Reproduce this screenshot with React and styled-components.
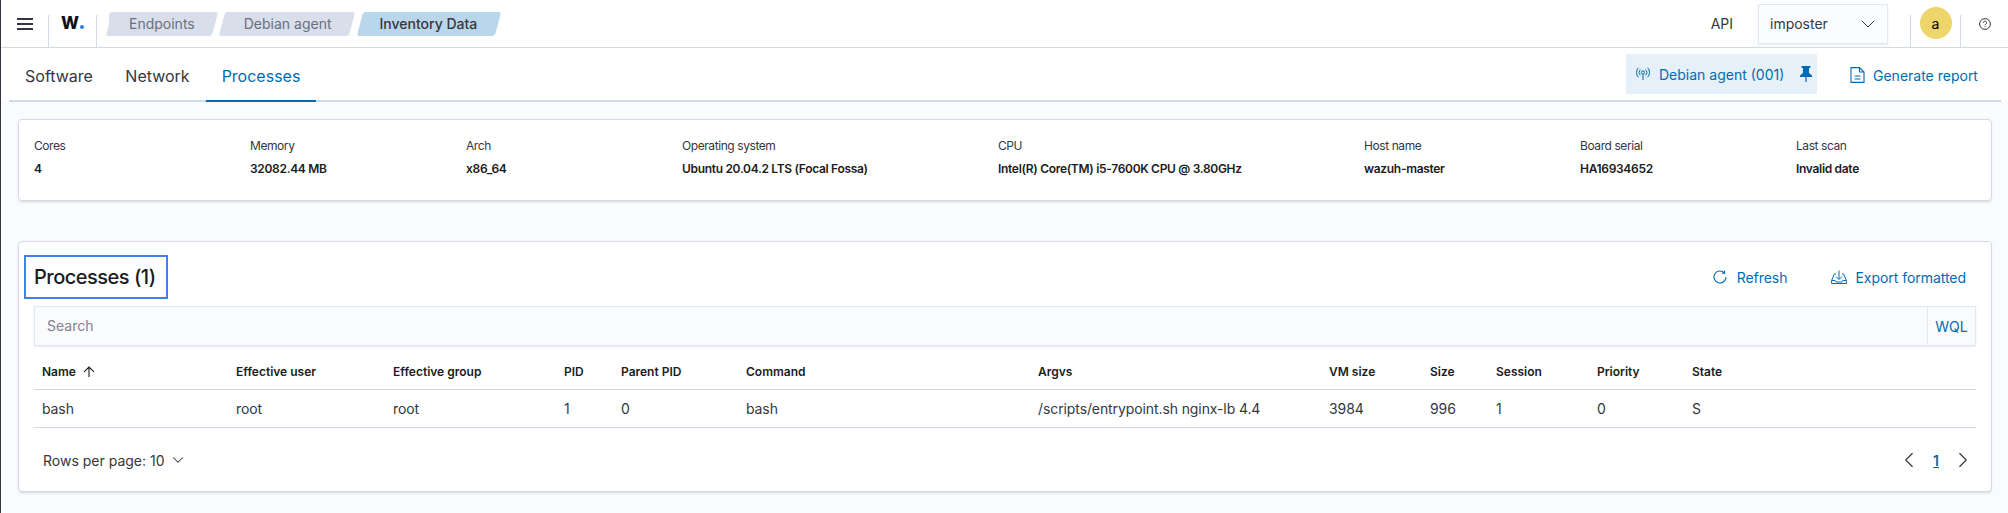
import React from "react";
import styled, { createGlobalStyle } from "styled-components";
import { ChevronDown, ChevronLeft, ChevronRight } from "lucide-react";

const Global = createGlobalStyle`
  html, body { margin: 0; padding: 0; background: #fafbfd; }
  * { box-sizing: border-box; }
  body { font-family: Inter, "Noto Sans", sans-serif; color: #343741; }
`;

const Page = styled.div`
  width: 2008px;
  height: 513px;
  overflow: hidden;
  border-left: 1px solid #343741;
  background: #fafbfd;
`;

const Header = styled.header`
  height: 48px;
  display: flex;
  align-items: center;
  background: #fff;
  border-bottom: 1px solid #d3dae6;
`;

const MenuButton = styled.div`
  width: 47px;
  height: 47px;
  display: flex;
  align-items: center;
  justify-content: center;
`;

const HeaderCell = styled.div`
  width: ${(p) => p.$w}px;
  height: 32px;
  margin-top: 15px;
  display: flex;
  align-items: flex-start;
  justify-content: center;
  border-left: 1px solid #d3dae6;
  ${(p) => p.$end && "border-right: 1px solid #d3dae6;"}
`;

const Logo = styled.div`
  display: flex;
  align-items: baseline;
  margin-top: -2px;
  font-size: 17px;
  font-weight: 800;
  line-height: 20px;
  color: #111;
`;

const LogoDot = styled.span`
  width: 4px;
  height: 4px;
  margin-left: 1px;
  border-radius: 50%;
  background: #2f7ff0;
`;

const Crumbs = styled.nav`
  display: flex;
  align-items: center;
  margin-left: 12px;
`;

const Crumb = styled.div`
  position: relative;
  height: 24px;
  padding: 0 20px 0 ${(p) => p.$pl || 20}px;
  margin-left: ${(p) => p.$ml || 0}px;
  display: flex;
  align-items: center;
  font-size: 14px;
  font-weight: ${(p) => (p.$current ? 500 : 400)};
  color: ${(p) => (p.$current ? "#343741" : "#69707d")};
  z-index: 0;
  &::before {
    content: "";
    position: absolute;
    inset: 0;
    z-index: -1;
    border-radius: 3px;
    transform: skewX(-15deg);
    background: ${(p) => (p.$current ? "#b9d6ea" : "#d9dfea")};
  }
  ${(p) =>
    p.$first &&
    `&::after { content: ""; position: absolute; z-index: -1; left: 0; top: 0; bottom: 0; width: 12px; background: #d9dfea; border-radius: 4px 0 0 4px; }`}
`;

const Spacer = styled.div`
  flex: 1;
`;

const ApiLabel = styled.span`
  font-size: 14px;
  margin-right: 25px;
`;

const Select = styled.div`
  width: 130px;
  height: 40px;
  padding: 0 7px 0 11px;
  display: flex;
  align-items: center;
  justify-content: space-between;
  font-size: 14px;
  background: #fbfcfd;
  border: 1px solid #e3e7ef;
  box-shadow: 0 1px 2px rgba(152, 162, 179, 0.25);
  margin-right: 22px;
`;

const Avatar = styled.div`
  width: 32px;
  height: 32px;
  margin-top: -8px;
  border-radius: 50%;
  background: #eed56a;
  color: #000;
  font-size: 14px;
  display: flex;
  align-items: center;
  justify-content: center;
`;

const HelpBox = styled.div`
  width: 47px;
  height: 47px;
  display: flex;
  align-items: center;
  justify-content: center;
`;

const TabsBar = styled.div`
  height: 54px;
  display: flex;
  align-items: stretch;
  margin-left: 8px;
  margin-right: 7px;
  border-bottom: 2px solid #d3dae6;
  background: #fff;
`;

const TabsBg = styled.div`
  background: #fff;
`;

const Tab = styled.div`
  width: ${(p) => p.$w}px;
  margin-bottom: -2px;
  display: flex;
  align-items: center;
  justify-content: center;
  padding-top: 4px;
  font-size: 16px;
  color: ${(p) => (p.$active ? "#006bb4" : "#343741")};
  border-bottom: 2px solid ${(p) => (p.$active ? "#006bb4" : "transparent")};
`;

const AgentButton = styled.div`
  width: 191px;
  height: 40px;
  margin-top: 6px;
  display: flex;
  align-items: center;
  padding-left: 9px;
  background: #e6f0f8;
  color: #006bb4;
  font-size: 14px;
  gap: 8px;
`;

const PinSlot = styled.span`
  margin-left: 8px;
  display: flex;
`;

const ReportButton = styled.div`
  display: flex;
  align-items: center;
  gap: 8px;
  margin: 2px 0 0 33px;
  width: 151px;
  color: #006bb4;
  font-size: 14px;
`;

const Card = styled.section`
  margin: 0 16px 0 17px;
  background: #fff;
  border: 1px solid #d3dae6;
  border-radius: 4px;
  box-shadow: 0 2px 2px -1px rgba(152, 162, 179, 0.3), 0 1px 5px -2px rgba(152, 162, 179, 0.3);
`;

const SummaryCard = styled(Card)`
  height: 82px;
  margin-top: 17px;
  padding: 17px 15px;
  display: flex;
`;

const Stat = styled.div`
  width: ${(p) => p.$w}px;
  flex: none;
`;

const StatLabel = styled.div`
  font-size: 12px;
  line-height: 18px;
  letter-spacing: -0.42px;
  color: #343741;
`;

const StatValue = styled.div`
  margin-top: 5px;
  font-size: 12px;
  line-height: 18px;
  font-weight: 600;
  letter-spacing: -0.31px;
  color: #1a1c21;
`;

const ProcessCard = styled(Card)`
  height: 251px;
  margin-top: 40px;
  padding: 13px 15px 0;
`;

const TitleRow = styled.div`
  height: 44px;
  display: flex;
  align-items: center;
  justify-content: space-between;
`;

const Title = styled.h2`
  margin: 0 0 0 -10px;
  height: 44px;
  width: 144px;
  padding-left: 8px;
  display: flex;
  align-items: center;
  font-size: 20px;
  font-weight: 500;
  letter-spacing: -0.5px;
  color: #1a1c21;
  border: 2px solid #3b82f0;
`;

const Actions = styled.div`
  display: flex;
  align-items: center;
  margin-right: 10px;
`;

const Action = styled.div`
  display: flex;
  align-items: center;
  gap: ${(p) => p.$gap}px;
  margin-left: ${(p) => p.$ml || 0}px;
  font-size: 14px;
  letter-spacing: -0.04px;
  color: #006bb4;
`;

const SearchBar = styled.div`
  margin-top: 7px;
  height: 40px;
  display: flex;
  background: #fafbfd;
  border: 1px solid #e3e7ef;
  box-shadow: 0 1px 2px rgba(152, 162, 179, 0.2);
`;

const SearchText = styled.div`
  flex: 1;
  padding: 0 0 1px 12px;
  display: flex;
  align-items: center;
  font-size: 14px;
  color: #7d8390;
`;

const Wql = styled.div`
  width: 48px;
  display: flex;
  align-items: center;
  justify-content: center;
  border-left: 1px solid #e3e7ef;
  font-size: 14px;
  color: #006bb4;
`;

const Table = styled.div`
  margin-top: 8px;
`;

const Row = styled.div`
  display: grid;
  grid-template-columns: 194px 157px 171px 57px 125px 292px 291px 101px 66px 101px 95px 1fr;
  align-items: center;
  height: ${(p) => p.$h}px;
  border-bottom: 1px solid #d3dae6;
`;

const HeadCell = styled.div`
  padding-left: 8px;
  display: flex;
  align-items: center;
  gap: 7px;
  font-size: 12px;
  font-weight: 600;
  color: #1a1c21;
`;

const BodyCell = styled.div`
  padding-left: 8px;
  font-size: 14px;
  letter-spacing: -0.1px;
  color: #343741;
`;

const Footer = styled.div`
  height: 64px;
  display: flex;
  align-items: center;
  justify-content: space-between;
  padding: 0 0 0 9px;
`;

const PerPage = styled.div`
  display: flex;
  align-items: center;
  gap: 4px;
  font-size: 14px;
  color: #343741;
`;

const Pager = styled.div`
  display: flex;
  align-items: center;
  gap: 11px;
  font-size: 14px;
`;

const PageNo = styled.span`
  color: #006bb4;
  font-weight: 600;
  text-decoration: underline;
`;

const HamburgerIcon = () => (
  <svg width="16" height="12" viewBox="0 0 16 12" fill="none" stroke="#343741" strokeWidth="2">
    <path d="M0 1h16M0 6h16M0 11h16" />
  </svg>
);

const SignalIcon = () => (
  <svg width="16" height="16" viewBox="0 0 16 16" fill="none" stroke="#006bb4" strokeWidth="1">
    <circle cx="8" cy="6.5" r="1.6" />
    <path d="M8 8.2V14M5.3 3.7a4 4 0 0 0 0 5.6M10.7 3.700a4 4 0 0 1 0 5.600M3.300 1.800a7 7 0 0 0 0 9.400M12.700 1.800a7 7 0 0 1 0 9.400" />
  </svg>
);

const PinIcon = () => (
  <svg width="12" height="16" viewBox="0 0 12 16" fill="#006bb4">
    <path d="M1.500 0h9v1.500L9 2.200V7l3 2.500V11H6.600v5H5.400v-5H0V9.500L3 7V2.200L1.500 1.500z" />
  </svg>
);

const ReportIcon = () => (
  <svg width="15" height="16" viewBox="0 0 15 16" fill="none" stroke="#006bb4" strokeWidth="1.100">
    <path d="M1 .6h8.500L14 5v10.400H1zM9.500.6V5H14M4.500 9h6M4.500 12h6" />
  </svg>
);

const RefreshIcon = () => (
  <svg width="14" height="14" viewBox="0 0 14 14" fill="none" stroke="#006bb4" strokeWidth="1.100">
    <path d="M11.200 2.700A6 6 0 1 0 13 7M11.600.6v2.600H9" />
  </svg>
);

const ExportIcon = () => (
  <svg width="16" height="14" viewBox="0 0 16 14" fill="none" stroke="#006bb4" strokeWidth="1">
    <path d="M5 4H3.400L.6 10.500v3h14.800v-3L12.600 4H11M8 .5v8.500M5 6.500 8 9.500l3-3M.6 10.500h3.600l1 1.500h5.600l1-1.500h3.600" />
  </svg>
);

const HelpIcon = () => (
  <svg width="12" height="12" viewBox="0 0 12 12" fill="none" stroke="#343741" strokeWidth="1">
    <circle cx="6" cy="6" r="5.400" />
    <path d="M4.400 4.700a1.600 1.600 0 1 1 2.400 1.400c-.6.300-.8.600-.8 1.100M6 8.300v1" />
  </svg>
);

const SortIcon = () => (
  <svg width="12" height="11" viewBox="0 0 12 11" fill="none" stroke="#1a1c21" strokeWidth="1.100">
    <path d="M6 11V1M1 5.800 6 1l5 4.800" />
  </svg>
);

const stats = [
  ["Cores", "4", 216],
  ["Memory", "32082.44 MB", 216],
  ["Arch", "x86_64", 216],
  ["Operating system", "Ubuntu 20.04.2 LTS (Focal Fossa)", 316],
  ["CPU", "Intel(R) Core(TM) i5-7600K CPU @ 3.80GHz", 366],
  ["Host name", "wazuh-master", 216],
  ["Board serial", "HA16934652", 216],
  ["Last scan", "Invalid date", 180],
];

const heads = ["Effective user", "Effective group", "PID", "Parent PID", "Command", "Argvs", "VM size", "Size", "Session", "Priority", "State"];

const cells = ["bash", "root", "root", "1", "0", "bash", "/scripts/entrypoint.sh nginx-lb 4.4", "3984", "996", "1", "0", "S"];

export default function App() {
  return (
    <Page>
      <Global />
      <Header>
        <MenuButton>
          <HamburgerIcon />
        </MenuButton>
        <HeaderCell $w={49} $end>
          <Logo>
            W<LogoDot />
          </Logo>
        </HeaderCell>
        <Crumbs>
          <Crumb $first>Endpoints</Crumb>
          <Crumb $ml={7} $pl={22}>
            Debian agent
          </Crumb>
          <Crumb $current $ml={8}>
            Inventory Data
          </Crumb>
        </Crumbs>
        <Spacer />
        <ApiLabel>API</ApiLabel>
        <Select>
          imposter
          <ChevronDown size={24} strokeWidth={1} color="#343741" />
        </Select>
        <HeaderCell $w={50}>
          <Avatar>a</Avatar>
        </HeaderCell>
        <HeaderCell $w={1} />
        <HelpBox>
          <HelpIcon />
        </HelpBox>
      </Header>
      <TabsBg>
        <TabsBar>
          <Tab $w={100}>Software</Tab>
          <Tab $w={97}>Network</Tab>
          <Tab $w={110} $active>
            Processes
          </Tab>
          <Spacer />
          <AgentButton>
            <SignalIcon />
            Debian agent (001)
            <PinSlot>
              <PinIcon />
            </PinSlot>
          </AgentButton>
          <ReportButton>
            <ReportIcon />
            Generate report
          </ReportButton>
        </TabsBar>
      </TabsBg>
      <SummaryCard>
        {stats.map(([label, value, w]) => (
          <Stat key={label} $w={w}>
            <StatLabel>{label}</StatLabel>
            <StatValue>{value}</StatValue>
          </Stat>
        ))}
      </SummaryCard>
      <ProcessCard>
        <TitleRow>
          <Title>Processes (1)</Title>
          <Actions>
            <Action $gap={10}>
              <RefreshIcon />
              Refresh
            </Action>
            <Action $gap={8} $ml={44}>
              <ExportIcon />
              Export formatted
            </Action>
          </Actions>
        </TitleRow>
        <SearchBar>
          <SearchText>Search</SearchText>
          <Wql>WQL</Wql>
        </SearchBar>
        <Table>
          <Row $h={36}>
            <HeadCell>
              Name <SortIcon />
            </HeadCell>
            {heads.map((h) => (
              <HeadCell key={h}>{h}</HeadCell>
            ))}
          </Row>
          <Row $h={38}>
            {cells.map((text, i) => (
              <BodyCell key={i}>{text}</BodyCell>
            ))}
          </Row>
        </Table>
        <Footer>
          <PerPage>
            Rows per page: 10
            <ChevronDown size={18} strokeWidth={1.4} color="#343741" />
          </PerPage>
          <Pager>
            <ChevronLeft size={26} strokeWidth={1} color="#343741" />
            <PageNo>1</PageNo>
            <ChevronRight size={26} strokeWidth={1} color="#343741" />
          </Pager>
        </Footer>
      </ProcessCard>
    </Page>
  );
}
